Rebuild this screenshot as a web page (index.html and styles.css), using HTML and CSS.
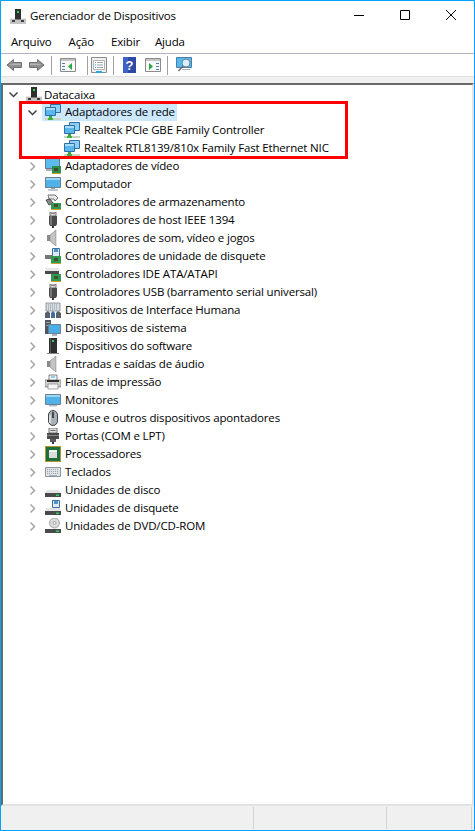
FILE: index.html
```html
<!DOCTYPE html>
<html lang="pt-BR">
<head>
<meta charset="utf-8">
<title>Gerenciador de Dispositivos</title>
<link rel="stylesheet" href="styles.css">
</head>
<body>
<svg class="defs" width="0" height="0" aria-hidden="true">
  <defs>
    <symbol id="chev" viewBox="0 0 9 9"><path d="M2.5 .5 6.5 4.5 2.5 8.5" fill="none" stroke="#a6a6a6" stroke-width="1.5"/></symbol>
    <symbol id="chev-open" viewBox="0 0 9 9"><path d="M.5 2.5 4.5 6.5 8.5 2.5" fill="none" stroke="#404040" stroke-width="1.5"/></symbol>
    <symbol id="host" viewBox="0 0 16 16"><path d="M0 10h16v6H0z" fill="#c4c4c4"/><path d="M0 10h16v1H0z" fill="#e8e8e8"/><path d="M2 12h3v2H2zM11 12h3v2h-3z" fill="#404040"/><path d="M5 1h6v10H5z" fill="#2f2f2f"/><path d="M7 3h2v2H7z" fill="#2fd45a"/><path d="M5 11h6v1H5z" fill="#777"/></symbol>
    <symbol id="net" viewBox="0 0 16 16"><path d="M5.5 .5h10v8h-10z" fill="#8fd0f4" stroke="#2f6fa8"/><path d="M.5 3.5h10v8H.5z" fill="#59b7ee" stroke="#2f6fa8"/><path d="M1 4h9v2H1z" fill="#a9dcf8"/><path d="M4 12h3v2H4z" fill="#3aa53a"/><path d="M0 14h16v2H0z" fill="#c9d4c4"/><path d="M3 14h5v2H3z" fill="#3db53d"/></symbol>
    <symbol id="video" viewBox="0 0 16 16"><path d="M.5 .5h14v10H.5z" fill="#5dbcee" stroke="#66788a"/><path d="M1 11h12v2H1z" fill="#a9b4bd"/><path d="M7 8h9v7H7z" fill="#2f8f4a"/><path d="M9 10h4v3H9z" fill="#404a30"/><path d="M7 15h9v1H7z" fill="#c9a23a"/></symbol>
    <symbol id="pc" viewBox="0 0 16 16"><path d="M.5 1.500h15v10H.5z" fill="#4fb3ea" stroke="#6c7f90"/><path d="M1 2h14v2H1z" fill="#98d6f6"/><path d="M6 12h4v1H6z" fill="#98a4ae"/><path d="M3 13h10v2H3z" fill="#c0c8ce"/></symbol>
    <symbol id="storage" viewBox="0 0 16 16"><path d="M3 1h7l3 3-3 3 -1-2-5 0z" fill="#e8e8e8" stroke="#555" stroke-width=".8"/><path d="M1 6 5 5 8 9 4 11z" fill="#888" stroke="#333" stroke-width=".8"/><path d="M6 9h10v6H6z" fill="#2f9a50"/><path d="M9 10h4v3H9z" fill="#44502e"/><path d="M6 15h10v1H6z" fill="#c9a23a"/></symbol>
    <symbol id="plug" viewBox="0 0 16 16"><path d="M5 0h6v4H5z" fill="#d8d8d8" stroke="#555" stroke-width=".8"/><path d="M6.500 1h1v1h-1zM8.500 1h1v1h-1z" fill="#444"/><path d="M4 4h8v8l-1 2H5l-1-2z" fill="#4a4a4a"/><path d="M5 4h2v9H5z" fill="#777"/><path d="M7 14h2v2H7z" fill="#333"/></symbol>
    <symbol id="sound" viewBox="0 0 16 16"><path d="M2 5h3v6H2z" fill="#8a8a8a"/><path d="M5 5 11 0v16l-6-5z" fill="#c4c4c4" stroke="#8a8a8a" stroke-width=".7"/><path d="M11 1h1v14h-1z" fill="#e2e2e2"/></symbol>
    <symbol id="floppy" viewBox="0 0 16 16"><path d="M7.500 .5h7v8h-7z" fill="#dfeaf3" stroke="#3f6ea0"/><path d="M9 1h4v3H9z" fill="#4f93cf"/><path d="M0 7h8v4H0z" fill="#777"/><path d="M6 8h10v7H6z" fill="#2f9a50"/><path d="M9 10h4v3H9z" fill="#44502e"/><path d="M6 15h10v1H6z" fill="#c9a23a"/></symbol>
    <symbol id="ide" viewBox="0 0 16 16"><path d="M0 2h13l3 3H0z" fill="#e8e8e8"/><path d="M0 5h14v3H0z" fill="#4a4a4a"/><path d="M6 8h10v7H6z" fill="#2f9a50"/><path d="M9 10h4v3H9z" fill="#44502e"/><path d="M6 15h10v1H6z" fill="#c9a23a"/></symbol>
    <symbol id="hid" viewBox="0 0 16 16"><path d="M1 1h14v8H1z" fill="#d8dde2" stroke="#7e868e" stroke-width=".8"/><path d="M3 3h10M3 5h10M3 7h10" stroke="#8d96a0" stroke-dasharray="1 1" fill="none"/><path d="M0 16V11l3-2 2 2v5z" fill="#5a6068"/><path d="M6 16V11l2-2 2 2v5z" fill="#3f6ea0"/><path d="M11 16V11l2-2 3 2v5z" fill="#5a6068"/></symbol>
    <symbol id="system" viewBox="0 0 16 16"><path d="M0 0h6v14H0z" fill="#4f565c"/><path d="M1 2h4v1H1zM1 5h4v1H1z" fill="#9aa2a8"/><path d="M3.500 4.500h12v9h-12z" fill="#49aee8" stroke="#6c7f90"/><path d="M7 14h5v2H7z" fill="#a9b4bd"/></symbol>
    <symbol id="software" viewBox="0 0 16 16"><path d="M4 0h8v15H4z" fill="#2f2f2f"/><path d="M7 2h2v2H7z" fill="#2fd45a"/><path d="M2 15h12v1H2z" fill="#888"/><path d="M5 0h1v15H5z" fill="#555"/></symbol>
    <symbol id="printer" viewBox="0 0 16 16"><path d="M4 1h8v6H4z" fill="#f4f4f4" stroke="#666" stroke-width=".8"/><path d="M6 2.500h4v1H6z" fill="#2aa7e0"/><path d="M0 6h16v7H0z" fill="#d0d0d0" stroke="#555" stroke-width=".6"/><path d="M2 6h12v2H2z" fill="#2f2f2f"/><path d="M3 10h10v5H3z" fill="#f6f6f6" stroke="#777" stroke-width=".6"/></symbol>
    <symbol id="monitor" viewBox="0 0 16 16"><path d="M.5 2.500h15v10H.5z" fill="#4fb3ea" stroke="#6c7f90"/><path d="M1 3h14v2H1z" fill="#98d6f6"/><path d="M4 13h8v1.500H4z" fill="#b5bec6"/></symbol>
    <symbol id="mouse" viewBox="0 0 16 16"><rect x="3.500" y=".5" width="9" height="15" rx="4.500" fill="#a8b0b8" stroke="#444"/><path d="M7 2h2v6H7z" fill="#40484f"/><path d="M4 5h2v8H4z" fill="#d6dade"/></symbol>
    <symbol id="port" viewBox="0 0 16 16"><path d="M4 0h8v5H4z" fill="#e0e0e0" stroke="#555" stroke-width=".8"/><path d="M5.500 2h5v1h-5z" fill="#666"/><path d="M2 5h12v6H2z" fill="#4a4a4a"/><path d="M2 7h12v1H2z" fill="#888"/><path d="M5 11h6v3H5z" fill="#5a5a5a"/><path d="M7 14h2v2H7z" fill="#333"/></symbol>
    <symbol id="cpu" viewBox="0 0 16 16"><path d="M0 0h16v16H0z" fill="#b5962f"/><path d="M1 1h14v14H1z" fill="#1f6f3c"/><path d="M4 4h8v8H4z" fill="#dcdcdc"/><path d="M4 4h8v2H4z" fill="#f2f2f2"/></symbol>
    <symbol id="kbd" viewBox="0 0 16 16"><path d="M.5 3.500h15v9H.5z" fill="#dfe3e7" stroke="#8c949c"/><path d="M2 5.500h12M2 7.500h12M2 9.500h12" stroke="#9aa4ae" stroke-dasharray="1 1" fill="none"/><path d="M4 11h8v1H4z" fill="#a8b0b8"/></symbol>
    <symbol id="disk" viewBox="0 0 16 16"><path d="M2 8h12l2 3H0z" fill="#e4e4e4"/><path d="M0 11h16v4H0z" fill="#4a4a4a"/><path d="M11 12.500h3v1.500h-3z" fill="#2fd45a"/></symbol>
    <symbol id="fdisk" viewBox="0 0 16 16"><path d="M7.500 .5h7v7h-7z" fill="#dfeaf3" stroke="#3f6ea0"/><path d="M9 1h4v3H9z" fill="#4f93cf"/><path d="M1 8h14l1 3H0z" fill="#e4e4e4"/><path d="M0 11h16v4H0z" fill="#4a4a4a"/><path d="M11 12.500h3v1.500h-3z" fill="#2fd45a"/></symbol>
    <symbol id="dvd" viewBox="0 0 16 16"><circle cx="9.500" cy="5" r="5" fill="#dcdcdc" stroke="#8a8a8a" stroke-width=".7"/><circle cx="9.500" cy="5" r="1.500" fill="#fff" stroke="#777" stroke-width=".6"/><path d="M0 11h16v4H0z" fill="#4a4a4a"/><path d="M11 12.500h3v1.500h-3z" fill="#2fd45a"/></symbol>
    <symbol id="back" viewBox="0 0 16 16"><path d="M7.500 2.500 1 8l6.500 5.500V10.500h8v-5h-8z" fill="#8f8f8f" stroke="#707070"/><path d="M7 6.500H15V8H3z" fill="#b4b4b4"/></symbol>
    <symbol id="forward" viewBox="0 0 16 16"><path d="M8.500 2.500 15 8l-6.500 5.500V10.500h-8v-5h8z" fill="#8f8f8f" stroke="#707070"/><path d="M1 6.500H9L13 8H1z" fill="#b4b4b4"/></symbol>
    <symbol id="panel-left" viewBox="0 0 16 16"><path d="M.5 1.500h15v13H.5z" fill="#f8f8f8" stroke="#8a8a8a"/><path d="M1 2h14v2H1z" fill="#c4c4c4"/><path d="M2 6h3v1H2zM2 9h3v1H2zM2 12h3v1H2z" fill="#4f7fae"/><path d="M12 6v7L8 9.500z" fill="#28a745"/></symbol>
    <symbol id="panel-right" viewBox="0 0 16 16"><path d="M.5 1.500h15v13H.5z" fill="#f8f8f8" stroke="#8a8a8a"/><path d="M1 2h14v2H1z" fill="#c4c4c4"/><path d="M11 6h3v1h-3zM11 9h3v1h-3zM11 12h3v1h-3z" fill="#4f7fae"/><path d="M4 6v7l4-3.500z" fill="#28a745"/></symbol>
    <symbol id="props" viewBox="0 0 16 16"><path d="M.5 .5h15v15H.5z" fill="#f0f0f0" stroke="#8a8a8a"/><path d="M2.500 3.500h11v9h-11z" fill="#fff" stroke="#b4b4b4"/><path d="M4 5h1v1H4zM4 7.500h1v1H4zM4 10h1v1H4z" fill="#3d8fd0"/><path d="M6 5h6v1H6zM6 7.500h6v1H6zM6 10h6v1H6z" fill="#9aa4ae"/><path d="M5 14h6v2H5z" fill="#2aa7e0"/></symbol>
    <symbol id="help" viewBox="0 0 14 16"><path d="M0 0h13v16H0z" fill="#2d4aa8"/><path d="M0 0h5v16H0z" fill="#3f62c6"/><text x="6.500" y="13" text-anchor="middle" class="help-q">?</text></symbol>
    <symbol id="scan" viewBox="0 0 16 16"><path d="M.5 .5h15v10H.5z" fill="#55b8ee" stroke="#4d7ea6"/><circle cx="10" cy="6" r="4" fill="#d6effb" stroke="#6c8296"/><path d="M7 9 2.500 14" stroke="#6c6c6c" stroke-width="1.500"/><path d="M6 12h8v1H6z" fill="#a9b4bd"/></symbol>
  </defs>
</svg>

<div class="window">
  <header class="titlebar">
    <svg class="ico"><use href="#host"/></svg>
    <span class="title">Gerenciador de Dispositivos</span>
    <div class="controls">
      <svg class="ctl" viewBox="0 0 46 29"><path d="M18 14.500h10" stroke="#000" fill="none"/></svg>
      <svg class="ctl" viewBox="0 0 46 29"><path d="M18.500 9.500h9v9h-9z" stroke="#000" fill="none"/></svg>
      <svg class="ctl" viewBox="0 0 46 29"><path d="M18 9 28 19M28 9 18 19" stroke="#000" fill="none"/></svg>
    </div>
  </header>

  <nav class="menubar">
    <span class="menu">Arquivo</span>
    <span class="menu">Ação</span>
    <span class="menu menu-tight">Exibir</span>
    <span class="menu">Ajuda</span>
  </nav>

  <div class="toolbar">
    <div class="tgroup"><svg class="ico"><use href="#back"/></svg><svg class="ico"><use href="#forward"/></svg></div>
    <i class="sep"></i>
    <div class="tgroup"><svg class="ico"><use href="#panel-left"/></svg></div>
    <i class="sep sep-wide"></i>
    <div class="tgroup tgroup-tight"><svg class="ico"><use href="#props"/></svg></div>
    <i class="sep"></i>
    <div class="tgroup"><svg class="ico"><use href="#help"/></svg><svg class="ico"><use href="#panel-right"/></svg></div>
    <i class="sep"></i>
    <div class="tgroup"><svg class="ico"><use href="#scan"/></svg></div>
  </div>

  <div class="band"></div>

  <main class="tree">
    <div class="row d0"><svg class="chev"><use href="#chev-open"/></svg><span class="label"><svg class="ico"><use href="#host"/></svg><span class="text">Datacaixa</span></span></div>
    <div class="row d1"><svg class="chev"><use href="#chev-open"/></svg><span class="label selected"><svg class="ico"><use href="#net"/></svg><span class="text">Adaptadores de rede</span></span></div>
    <div class="row d2"><span class="label"><svg class="ico"><use href="#net"/></svg><span class="text">Realtek PCIe GBE Family Controller</span></span></div>
    <div class="row d2"><span class="label"><svg class="ico"><use href="#net"/></svg><span class="text">Realtek RTL8139/810x Family Fast Ethernet NIC</span></span></div>
    <div class="row d1"><svg class="chev"><use href="#chev"/></svg><span class="label"><svg class="ico"><use href="#video"/></svg><span class="text">Adaptadores de vídeo</span></span></div>
    <div class="row d1"><svg class="chev"><use href="#chev"/></svg><span class="label"><svg class="ico"><use href="#pc"/></svg><span class="text">Computador</span></span></div>
    <div class="row d1"><svg class="chev"><use href="#chev"/></svg><span class="label"><svg class="ico"><use href="#storage"/></svg><span class="text">Controladores de armazenamento</span></span></div>
    <div class="row d1"><svg class="chev"><use href="#chev"/></svg><span class="label"><svg class="ico"><use href="#plug"/></svg><span class="text">Controladores de host IEEE 1394</span></span></div>
    <div class="row d1"><svg class="chev"><use href="#chev"/></svg><span class="label"><svg class="ico"><use href="#sound"/></svg><span class="text">Controladores de som, vídeo e jogos</span></span></div>
    <div class="row d1"><svg class="chev"><use href="#chev"/></svg><span class="label"><svg class="ico"><use href="#floppy"/></svg><span class="text">Controladores de unidade de disquete</span></span></div>
    <div class="row d1"><svg class="chev"><use href="#chev"/></svg><span class="label"><svg class="ico"><use href="#ide"/></svg><span class="text">Controladores IDE ATA/ATAPI</span></span></div>
    <div class="row d1"><svg class="chev"><use href="#chev"/></svg><span class="label"><svg class="ico"><use href="#plug"/></svg><span class="text">Controladores USB (barramento serial universal)</span></span></div>
    <div class="row d1"><svg class="chev"><use href="#chev"/></svg><span class="label"><svg class="ico"><use href="#hid"/></svg><span class="text">Dispositivos de Interface Humana</span></span></div>
    <div class="row d1"><svg class="chev"><use href="#chev"/></svg><span class="label"><svg class="ico"><use href="#system"/></svg><span class="text">Dispositivos de sistema</span></span></div>
    <div class="row d1"><svg class="chev"><use href="#chev"/></svg><span class="label"><svg class="ico"><use href="#software"/></svg><span class="text">Dispositivos do software</span></span></div>
    <div class="row d1"><svg class="chev"><use href="#chev"/></svg><span class="label"><svg class="ico"><use href="#sound"/></svg><span class="text">Entradas e saídas de áudio</span></span></div>
    <div class="row d1"><svg class="chev"><use href="#chev"/></svg><span class="label"><svg class="ico"><use href="#printer"/></svg><span class="text">Filas de impressão</span></span></div>
    <div class="row d1"><svg class="chev"><use href="#chev"/></svg><span class="label"><svg class="ico"><use href="#monitor"/></svg><span class="text">Monitores</span></span></div>
    <div class="row d1"><svg class="chev"><use href="#chev"/></svg><span class="label"><svg class="ico"><use href="#mouse"/></svg><span class="text">Mouse e outros dispositivos apontadores</span></span></div>
    <div class="row d1"><svg class="chev"><use href="#chev"/></svg><span class="label"><svg class="ico"><use href="#port"/></svg><span class="text">Portas (COM e LPT)</span></span></div>
    <div class="row d1"><svg class="chev"><use href="#chev"/></svg><span class="label"><svg class="ico"><use href="#cpu"/></svg><span class="text">Processadores</span></span></div>
    <div class="row d1"><svg class="chev"><use href="#chev"/></svg><span class="label"><svg class="ico"><use href="#kbd"/></svg><span class="text">Teclados</span></span></div>
    <div class="row d1"><svg class="chev"><use href="#chev"/></svg><span class="label"><svg class="ico"><use href="#disk"/></svg><span class="text">Unidades de disco</span></span></div>
    <div class="row d1"><svg class="chev"><use href="#chev"/></svg><span class="label"><svg class="ico"><use href="#fdisk"/></svg><span class="text">Unidades de disquete</span></span></div>
    <div class="row d1"><svg class="chev"><use href="#chev"/></svg><span class="label"><svg class="ico"><use href="#dvd"/></svg><span class="text">Unidades de DVD/CD-ROM</span></span></div>
    <div class="callout"></div>
  </main>

  <footer class="statusbar">
    <div class="pane pane-a"></div>
    <div class="pane pane-b"></div>
    <div class="pane pane-c"></div>
  </footer>
</div>
</body>
</html>
```

FILE: styles.css
```css
* { box-sizing: border-box; }
html, body { margin: 0; height: 100%; }
body { font-family: "Open Sans", "Noto Sans", sans-serif; font-size: 11.5px; letter-spacing: -.16px; color: #000; background: #fff; }
.defs { position: absolute; }
.window { height: 831px; display: flex; flex-direction: column; border: 1px solid #00a2ff; background: #fff; }
.ico { width: 16px; height: 16px; flex: none; display: block; }
.help-q { font: bold 13px "Liberation Sans", sans-serif; fill: #fff; }

.titlebar { height: 29px; flex: none; display: flex; align-items: center; padding-left: 9px; }
.title { margin-left: 4px; }
.controls { margin-left: auto; display: flex; align-self: flex-start; }
.ctl { width: 46px; height: 29px; display: block; }

.menubar { height: 24px; flex: none; display: flex; align-items: center; border-bottom: 1px solid #b4b4c4; padding: 0 0 1px 10px; }
.menu { margin-right: 17px; }
.menu-tight { margin-right: 15px; }

.toolbar { height: 22px; flex: none; display: flex; align-items: center; padding-left: 5px; }
.tgroup { display: flex; gap: 7px; }
.tgroup-tight { margin-left: -5px; }
.sep { width: 1px; height: 19px; background: #a0a0a0; margin: 0 8px 0 6px; }
.sep-wide { margin-left: 11px; }

.band { height: 7px; flex: none; background: #f0f0f0; border-top: 1px solid #e0e0e0; }

.tree { flex: 1; min-height: 0; position: relative; border-top: 2px solid #696969; border-left: 2px solid #696969; border-right: 2px solid #e3e3e3; border-bottom: 2px solid #e3e3e3; }
.row { height: 18px; display: flex; align-items: center; }
.d0 { padding-left: 4px; }
.d1 { padding-left: 23px; }
.d2 { padding-left: 61px; }
.chev { width: 9px; height: 9px; flex: none; margin: 0 8px 0 2px; }
.label { display: inline-flex; align-items: center; height: 18px; gap: 4px; white-space: nowrap; }
.text { display: block; }
.d0 .text { margin-left: -2px; }
.d1 .text, .d2 .text { margin-bottom: 2px; }
.selected { background: #cce8ff; margin-left: -3px; padding: 0 2px 0 3px; }
.callout { position: absolute; left: 16px; top: 16px; width: 329px; height: 58px; border: 3px solid #f00; pointer-events: none; }

.statusbar { height: 24px; flex: none; display: flex; background: #f0f0f0; padding: 1px 2px 1px 0; }
.pane { border-right: 1px solid #d4d4d4; }
.pane-a { width: 253px; }
.pane-b { width: 133px; }
.pane-c { flex: 1; }
```
